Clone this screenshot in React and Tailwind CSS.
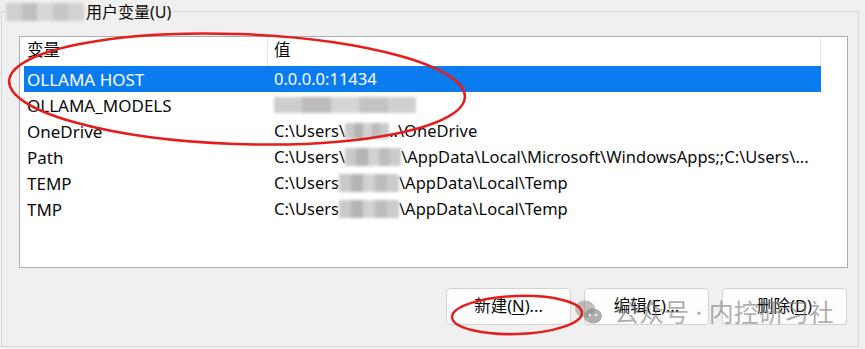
import React from "react";

const FONT = { fontFamily: '"Noto Sans", "Noto Sans CJK SC", sans-serif' };

function Blur({ w, h = 16, className = "" }) {
  return (
    <span
      className={`inline-flex align-middle overflow-hidden blur-[1.5px] ${className}`}
      style={{ width: w, height: h }}
    >
      <span className="flex-1 bg-[#c9c9c9]" />
      <span className="flex-1 bg-[#b5b3b3]" />
      <span className="flex-1 bg-[#d2d2d2]" />
      <span className="flex-1 bg-[#bdbdbd]" />
      <span className="flex-1 bg-[#cbcbcb]" />
    </span>
  );
}

function Row({ name, value, selected }) {
  return (
    <div
      className={`ml-[4px] w-[797px] h-[26px] flex items-center leading-none ${
        selected ? "bg-[#0a7cf0] text-white" : "text-[#0a0a0a]"
      }`}
    >
      <div className="w-[244px] pl-[3px] whitespace-nowrap text-[17px]">{name}</div>
      <div className="pl-[6px] whitespace-nowrap flex items-center text-[16.5px]">{value}</div>
    </div>
  );
}

function Btn({ label, k, rest }) {
  return (
    <div className="w-[125px] h-[37px] rounded-[4px] border border-[#d3d3d3] bg-[#fdfdfd] flex items-center justify-center text-[16.5px] text-[#0a0a0a]">
      {label}(<span className="underline underline-offset-2">{k}</span>){rest}
    </div>
  );
}

export default function App() {
  return (
    <div className="w-[865px] h-[349px] bg-[#f0f0f0] relative overflow-hidden" style={FONT}>
      {/* group box */}
      <div className="mt-[11px] ml-[1px] w-[858px] h-[336px] border border-[#d6d6d6] relative">
        <div className="absolute -top-[11px] left-[4px] h-[22px] bg-[#f0f0f0] flex items-center pr-[2px] text-[16px] text-[#0a0a0a]">
          <Blur w={78} h={18} className="opacity-80" />
          <span className="ml-[2px]">用户变量(U)</span>
        </div>

        <div className="pl-[17px] pt-[24px]">
          <div className="w-[829px] h-[232px] border border-[#a9aeb5] bg-white">
            {/* header */}
            <div className="h-[29px] flex text-[16.5px] text-[#0a0a0a] leading-none">
              <div className="ml-[4px] w-[244px] pl-[3px] pt-[5px] border-r border-[#e6e6e6]">变量</div>
              <div className="w-[553px] pl-[6px] pt-[5px] border-r border-[#e6e6e6]">值</div>
            </div>
            <Row name="OLLAMA HOST" value="0.0.0.0:11434" selected />
            <Row
              name="OLLAMA_MODELS"
              value={<Blur w={142} h={16} className="opacity-90" />}
            />
            <Row
              name="OneDrive"
              value={
                <>
                  C:\Users\<Blur w={44} h={16} />..\OneDrive
                </>
              }
            />
            <Row
              name="Path"
              value={
                <>
                  C:\Users\<Blur w={56} h={18} />\AppData\Local\Microsoft\WindowsApps;;C:\Users\...
                </>
              }
            />
            <Row
              name="TEMP"
              value={
                <>
                  C:\Users<Blur w={60} h={18} />\AppData\Local\Temp
                </>
              }
            />
            <Row
              name="TMP"
              value={
                <>
                  C:\Users<Blur w={60} h={18} />\AppData\Local\Temp
                </>
              }
            />
          </div>

          <div className="mt-[20px] w-[829px] flex justify-end gap-[13px] pr-[1px]">
            <Btn label="新建" k="N" rest="..." />
            <Btn label="编辑" k="E" rest="..." />
            <Btn label="删除" k="D" rest="" />
          </div>
        </div>
      </div>

      {/* watermark */}
      <div className="absolute left-[574px] top-[298px] flex items-center gap-[10px] text-[rgba(120,120,120,0.6)]">
        <svg width="30" height="28" viewBox="0 0 30 28">
          <ellipse cx="11" cy="11" rx="10" ry="8.5" fill="rgba(140,140,140,0.55)" />
          <ellipse cx="19" cy="18" rx="9" ry="7.5" fill="rgba(140,140,140,0.7)" />
          <circle cx="16" cy="17" r="1.3" fill="#f0f0f0" />
          <circle cx="22" cy="17" r="1.3" fill="#f0f0f0" />
        </svg>
        <span className="text-[25px] leading-none">公众号 · 内控研习社</span>
      </div>

      {/* red annotations */}
      <svg className="absolute left-0 top-0 pointer-events-none" width="865" height="349">
        <ellipse
          cx="237"
          cy="89"
          rx="228"
          ry="55"
          transform="rotate(2 237 89)"
          fill="none"
          stroke="#e41d1d"
          strokeWidth="2.5"
        />
        <ellipse
          cx="517"
          cy="315"
          rx="65"
          ry="19"
          transform="rotate(-2 517 315)"
          fill="none"
          stroke="#e41d1d"
          strokeWidth="2.5"
        />
      </svg>
    </div>
  );
}
